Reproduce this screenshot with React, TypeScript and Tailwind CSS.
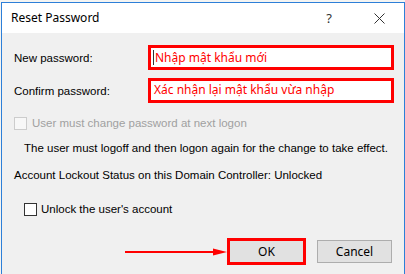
import React from "react";

export default function App() {
  const label = "text-[11.5px] leading-[13px] text-[#000] whitespace-nowrap";
  return (
    <div
      className="w-[405px] h-[274px] overflow-hidden bg-[#f4f4f2] pt-[2px] pl-[1px]"
      style={{ fontFamily: '"Liberation Sans", Arial, sans-serif' }}
    >
      <div className="w-[404px] h-[272px] flex flex-col border-t border-l border-r border-[#2d7fd8] bg-[#f0f0f0]">
        {/* Title bar */}
        <div className="h-[30px] shrink-0 bg-white flex items-center pl-[9px]">
          <span
            className="text-[12px] text-[#000] leading-none"
            style={{ fontFamily: '"Noto Sans", "Open Sans", sans-serif' }}
          >
            Reset Password
          </span>
          <span
            className="ml-auto text-[13px] text-[#333] leading-none mr-[42px]"
            style={{ fontFamily: '"Noto Sans", sans-serif' }}
          >
            ?
          </span>
          <svg width="11" height="11" viewBox="0 0 11 11" className="mr-[19px]">
            <path d="M0.5 0.5 L10.5 10.5 M10.5 0.5 L0.5 10.5" stroke="#333" strokeWidth="1" />
          </svg>
        </div>

        {/* Content */}
        <div className="flex flex-col pl-[12px] pr-[9px]">
          <div className="flex items-center mt-[12px] h-[25px]">
            <div className={`${label} w-[134px] pt-[2px]`}>New password:</div>
            <div className="w-[246px] h-[25px] border-[3px] border-[#ff0000] bg-white flex items-center pl-[2px]">
              <span className="w-[1px] h-[15px] bg-[#333] mr-[1px]" />
              <span
                className="text-[12px] text-[#ff0000] leading-none whitespace-nowrap"
                style={{ fontFamily: '"Noto Sans", "Open Sans", sans-serif' }}
              >
                Nhập mật khẩu mới
              </span>
            </div>
          </div>
          <div className="flex items-center mt-[8px] h-[25px]">
            <div className={`${label} w-[134px] pt-[2px]`}>Confirm password:</div>
            <div className="w-[246px] h-[25px] border-[3px] border-[#ff0000] bg-white flex items-center pl-[3px]">
              <span
                className="text-[12px] text-[#ff0000] leading-none whitespace-nowrap -mt-[2px]"
                style={{ fontFamily: '"Noto Sans", "Open Sans", sans-serif' }}
              >
                Xác nhận lại mật khẩu vừa nhập
              </span>
            </div>
          </div>

          <div className="flex items-center mt-[14px] h-[13px]">
            <div className="w-[13px] h-[13px] border border-[#cccccc] bg-[#f7f7f7]" />
            <span className="ml-[5px] text-[11.5px] leading-[13px] text-[#a0a0a0] whitespace-nowrap">
              User must change password at next logon
            </span>
          </div>

          <div className={`${label} mt-[12px] h-[13px] pl-[10px]`}>
            The user must logoff and then logon again for the change to take effect.
          </div>

          <div className={`${label} mt-[14px] h-[13px]`}>
            Account Lockout Status on this Domain Controller: Unlocked
          </div>

          <div className="flex items-center mt-[21px] h-[13px] pl-[10px]">
            <div className="w-[13px] h-[13px] border border-[#333333] bg-white" />
            <span className={`ml-[4px] ${label}`}>Unlock the user's account</span>
          </div>

          <div className="flex items-center justify-end mt-[24px] h-[23px] pr-[3px]">
            <svg width="102" height="10" viewBox="0 0 102 10" className="mr-[2px]">
              <line x1="0" y1="5" x2="90" y2="5" stroke="#ff0000" strokeWidth="2" />
              <polygon points="88,1.5 102,5 88,8.5" fill="#ff0000" />
            </svg>
            <button
              className="w-[75px] h-[23px] bg-[#e1e1e1] border border-[#0078d7] text-[12px] text-[#000] outline outline-[3px] outline-[#ff0000] outline-offset-[-1px]"
              style={{ fontFamily: '"Noto Sans", "Open Sans", sans-serif' }}
            >
              OK
            </button>
            <button
              className="ml-[13px] w-[75px] h-[23px] bg-[#e1e1e1] border border-[#adadad] text-[12px] text-[#000]"
              style={{ fontFamily: '"Noto Sans", "Open Sans", sans-serif' }}
            >
              Cancel
            </button>
          </div>
        </div>
      </div>
    </div>
  );
}
